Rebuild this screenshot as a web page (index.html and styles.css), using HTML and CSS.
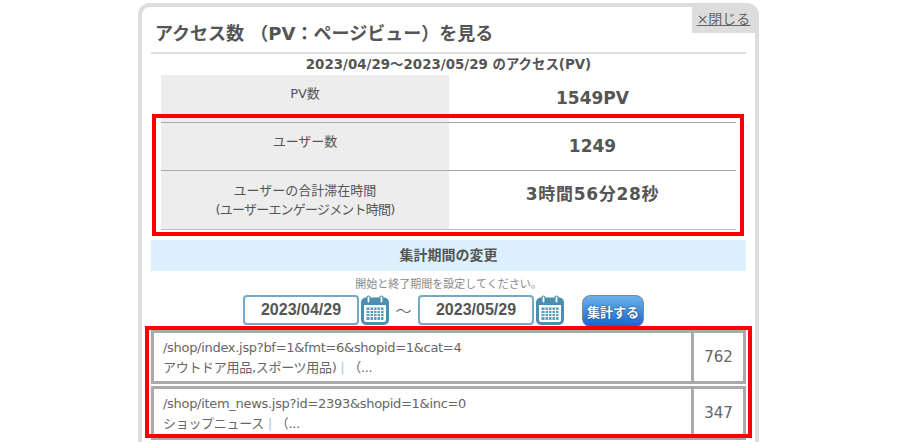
FILE: index.html
```html
<!DOCTYPE html>
<html lang="ja">
<head>
<meta charset="utf-8">
<title>アクセス数</title>
<link rel="stylesheet" href="styles.css">
</head>
<body>
<svg class="defs" width="0" height="0" aria-hidden="true">
  <symbol id="cal" viewBox="0 0 28 30">
    <rect x="1.500" y="4" width="25" height="24.500" rx="3.500" fill="#fff" stroke="#4a8fb0" stroke-width="3"/>
    <path d="M1.500 7.500a3.500 3.500 0 0 1 3.500-3.500h18a3.500 3.500 0 0 1 3.500 3.500V10h-25z" fill="#4a8fb0"/>
    <rect x="6" y="1" width="3" height="7" rx="1.500" fill="#fff" stroke="#4a8fb0" stroke-width="1.200"/>
    <rect x="19" y="1" width="3" height="7" rx="1.500" fill="#fff" stroke="#4a8fb0" stroke-width="1.200"/>
    <path d="M5.500 12.500h17v12.500h-17z" fill="#5d9dbb"/>
    <path d="M5.500 15.500h17M5.500 18.500h17M5.500 21.500h17M9 12.500v12.500M12.500 12.500v12.500M16 12.500v12.500M19.500 12.500v12.500" stroke="#fff" stroke-width="1" fill="none"/>
  </symbol>
</svg>
<main class="panel">
  <a class="close" href="#">×閉じる</a>
  <h1 class="title">アクセス数 （PV：ページビュー）を見る</h1>
  <p class="period">2023/04/29～2023/05/29 のアクセス(PV)</p>
  <div class="stats">
    <div class="stat stat-first">
      <div class="stat-label">PV数</div>
      <div class="stat-value">1549PV</div>
    </div>
    <div class="stat">
      <div class="stat-label">ユーザー数</div>
      <div class="stat-value">1249</div>
    </div>
    <div class="stat stat-tall">
      <div class="stat-label"><span>ユーザーの合計滞在時間<br><span class="note">(ユーザーエンゲージメント時間)</span></span></div>
      <div class="stat-value">3時間56分28秒</div>
    </div>
  </div>
  <h2 class="band">集計期間の変更</h2>
  <p class="hint">開始と終了期間を設定してください。</p>
  <form class="range">
    <input class="date" type="text" value="2023/04/29">
    <svg class="cal" width="28" height="30"><use href="#cal"/></svg>
    <span class="tilde">～</span>
    <input class="date" type="text" value="2023/05/29">
    <svg class="cal" width="28" height="30"><use href="#cal"/></svg>
    <button class="go" type="button">集計する</button>
  </form>
  <div class="rows">
    <div class="row">
      <div class="page">/shop/index.jsp?bf=1&amp;fmt=6&amp;shopid=1&amp;cat=4<br>アウトドア用品,スポーツ用品) <span class="sep">|</span> （...</div>
      <div class="count">762</div>
    </div>
    <div class="row">
      <div class="page">/shop/item_news.jsp?id=2393&amp;shopid=1&amp;inc=0<br>ショップニュース <span class="sep">|</span> （...</div>
      <div class="count">347</div>
    </div>
  </div>
  <div class="mark mark-stats"></div>
  <div class="mark mark-rows"></div>
</main>
</body>
</html>
```
FILE: styles.css
```css
* { box-sizing: border-box; }
html, body { margin: 0; padding: 0; }
body {
  width: 900px;
  height: 442px;
  overflow: hidden;
  background: #fff;
  color: #555;
  font-family: "DejaVu Sans", "Noto Sans CJK JP", sans-serif;
}
.defs { position: absolute; }
.panel {
  position: relative;
  width: 621px;
  height: 460px;
  margin: 3px 0 0 138px;
  padding: 0 9px;
  border: 4px solid #ddd;
  border-radius: 12px;
}
.close {
  position: absolute;
  top: 0;
  right: 0;
  width: 63px;
  height: 26px;
  padding-top: 3px;
  background: #ddd;
  color: #666;
  font-size: 14px;
  line-height: 18px;
  text-align: center;
}
.title {
  margin: 0;
  padding: 14px 0 0 4px;
  height: 47px;
  border-bottom: 2px solid #ddd;
  font-size: 18px;
  line-height: 26px;
  font-weight: 700;
  color: #555;
}
.period {
  margin: 0;
  height: 21px;
  font-size: 13.400px;
  line-height: 22px;
  font-weight: 700;
  text-align: center;
}
.stats {
  margin: 0 10px;
  width: 575px;
}
.stat {
  display: grid;
  grid-template-columns: 288px 287px;
  height: 48px;
  border-top: 1px solid #aaa;
}
.stat-first { border-top: 0; height: 47px; }
.stat-tall { height: 60px; border-bottom: 1px solid #bbb; }
.stat-label {
  display: flex;
  align-items: center;
  justify-content: center;
  background: #ededed;
  padding-bottom: 10px;
  font-size: 13px;
  line-height: 20px;
  text-align: center;
}
.stat-tall .stat-label { padding-bottom: 0; line-height: 19px; }
.note { letter-spacing: -0.800px; }
.stat-value {
  display: flex;
  align-items: center;
  justify-content: center;
  padding-bottom: 2px;
  font-size: 17px;
  font-weight: 700;
}
.stat-tall .stat-value { padding-bottom: 16px; letter-spacing: 0.700px; }
.band {
  margin: 10px 0 0;
  width: 595px;
  height: 31px;
  background: #dcf1fd;
  font-size: 14px;
  line-height: 30px;
  font-weight: 700;
  text-align: center;
}
.hint {
  margin: 7px 0 0;
  height: 17px;
  color: #888;
  font-size: 11px;
  line-height: 14px;
  text-align: center;
}
.range {
  display: flex;
  align-items: flex-start;
  height: 35px;
  margin-left: 92px;
}
.date {
  width: 116px;
  height: 30px;
  padding: 0;
  border: 2px solid #72a9c8;
  border-radius: 4px;
  background: #fff;
  color: #555;
  font-family: "Liberation Sans", sans-serif;
  font-size: 16px;
  font-weight: 700;
  text-align: center;
}
.cal { margin-left: 2px; flex: none; }
.tilde {
  width: 29px;
  text-align: center;
  font-size: 16px;
  line-height: 30px;
  font-family: "Noto Sans CJK JP", sans-serif;
  font-weight: 300;
}
.go {
  width: 62px;
  height: 32px;
  margin-left: 18px;
  padding: 0;
  border: 1px solid #888;
  border-radius: 8px;
  background: linear-gradient(#6cb0ea, #3f8fe0 50%, #1c63d0);
  color: #fff;
  font-family: "Noto Sans CJK JP", sans-serif;
  font-size: 13px;
  font-weight: 700;
  text-shadow: 0 0 2px #234;
}
.rows {
  display: flex;
  flex-direction: column;
  gap: 2px;
  width: 595px;
}
.row {
  display: grid;
  grid-template-columns: 1fr 52px;
  height: 54px;
  border: 3px solid #aaa;
}
.page {
  padding: 5px 0 0 9px;
  font-size: 13px;
  line-height: 20px;
  letter-spacing: -0.300px;
  color: #666;
}
.sep { color: #9cc8e8; }
.count {
  display: flex;
  align-items: center;
  justify-content: center;
  border-left: 3px solid #aaa;
  color: #666;
  font-size: 15px;
}
.mark {
  position: absolute;
  border: 4px solid #f00;
  pointer-events: none;
}
.mark-stats { left: 10px; top: 107px; width: 592px; height: 122px; }
.mark-rows { left: 3px; top: 319px; width: 607px; height: 112px; }
```
